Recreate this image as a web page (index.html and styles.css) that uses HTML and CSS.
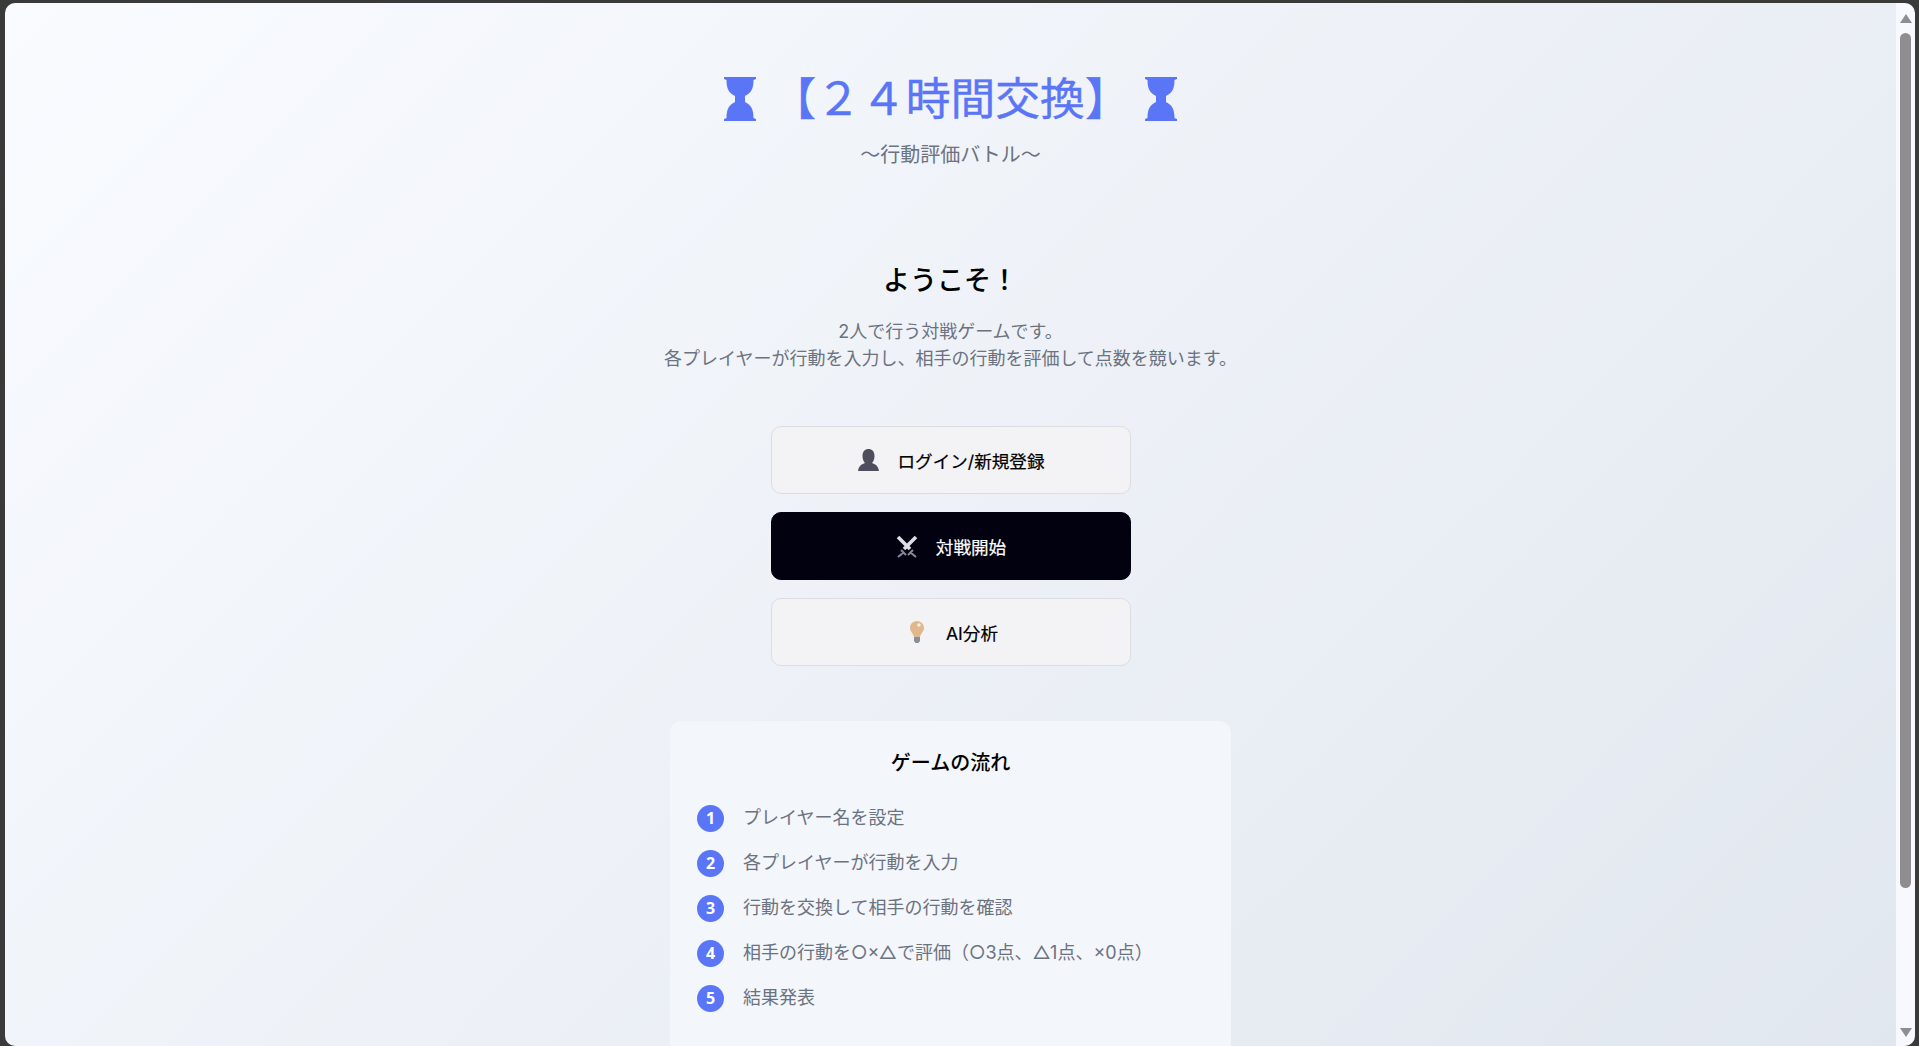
FILE: index.html

```html
<!DOCTYPE html>
<html lang="ja">
<head>
  <meta charset="UTF-8" />
  <meta name="viewport" content="width=device-width, initial-scale=1.0">
  <title>24時間交換</title>
  <link rel="stylesheet" href="styles.css">
</head>
<body>
<div class="window">
  <div class="page">
    <header class="header">
      <h1>
        <svg class="hourglass" viewBox="0 0 32 44" aria-hidden="true"><path d="M0 0H32V2L29.500 3C29.500 12 27 16 21 19V25C27 28 29.500 32 29.500 41L32 42V44H0V42L2.500 41C2.500 32 5 28 11 25V19C5 16 2.500 12 2.500 3L0 2Z"/></svg>
        <span>【２４時間交換】</span>
        <svg class="hourglass" viewBox="0 0 32 44" aria-hidden="true"><path d="M0 0H32V2L29.500 3C29.500 12 27 16 21 19V25C27 28 29.500 32 29.500 41L32 42V44H0V42L2.500 41C2.500 32 5 28 11 25V19C5 16 2.500 12 2.500 3L0 2Z"/></svg>
      </h1>
      <p class="subtitle">〜行動評価バトル〜</p>
    </header>

    <section class="welcome">
      <h2>ようこそ！</h2>
      <p>2人で行う対戦ゲームです。<br>各プレイヤーが行動を入力し、相手の行動を評価して点数を競います。</p>
    </section>

    <div class="actions">
      <button class="btn">
        <svg class="btn-icon" viewBox="0 0 24 24" aria-hidden="true"><path fill="#4e4e5e" d="M12.500 1C9 1 6.500 3.500 6.500 8C6.500 11 7.500 13.500 9 15C6 16 3 17.500 2 23H23C22 17.500 19 16 16 15C17.500 13.500 18.500 11 18.500 8C18.500 3.500 16 1 12.500 1Z"/></svg>
        <span>ログイン/新規登録</span>
      </button>
      <button class="btn btn-dark">
        <svg class="btn-icon" viewBox="0 0 24 24" aria-hidden="true">
          <path stroke="#dcdee6" stroke-width="3.600" fill="none" d="M3 3L15 15M21 3L9 15"/>
          <path stroke="#8a8a96" stroke-width="2" fill="none" d="M6 16L11 21M18 16L13 21M8.500 18.500L3 23M15.500 18.500L21 23"/>
        </svg>
        <span>対戦開始</span>
      </button>
      <button class="btn">
        <svg class="btn-icon btn-icon-bulb" viewBox="0 0 24 24" aria-hidden="true">
          <path fill="#e0b88c" d="M12 1C8 1 5 4 5 8C5 11.500 8 13 9 17H15C16 13 19 11.500 19 8C19 4 16 1 12 1Z"/>
          <circle cx="14" cy="5" r="1.800" fill="#f8eee2"/>
          <path fill="#8a8f9c" d="M9 17H15V21L13.500 23H10.500L9 21Z"/>
        </svg>
        <span>AI分析</span>
      </button>
    </div>

    <section class="flow">
      <h3>ゲームの流れ</h3>
      <ol class="steps">
        <li><span class="num">1</span>プレイヤー名を設定</li>
        <li><span class="num">2</span>各プレイヤーが行動を入力</li>
        <li><span class="num">3</span>行動を交換して相手の行動を確認</li>
        <li><span class="num">4</span>相手の行動を○×△で評価（○3点、△1点、×0点）</li>
        <li><span class="num">5</span>結果発表</li>
      </ol>
    </section>
  </div>

  <div class="scrollbar" aria-hidden="true">
    <span class="arrow-up"></span>
    <span class="thumb"></span>
    <span class="arrow-down"></span>
  </div>
</div>
</body>
</html>
```

FILE: styles.css

```css
* {
  box-sizing: border-box;
}

html, body {
  height: 100%;
}

body {
  margin: 0;
  padding: 3px 4px 0 5px;
  overflow: hidden;
  background: #3a3a3a;
  font-family: Inter, "Noto Sans CJK JP", sans-serif;
  color: #000;
}

.window {
  display: flex;
  height: 100%;
  overflow: hidden;
  border-radius: 10px;
}

.page {
  flex: 1;
  height: 1210px;
  padding-top: 66px;
  background: linear-gradient(135deg, #f9fbff 0%, #e0e6ee 100%);
}

.header {
  text-align: center;
}

h1 {
  display: flex;
  justify-content: center;
  align-items: center;
  gap: 15px;
  margin: 0;
  font-size: 44.800px;
  line-height: 60px;
  font-weight: 400;
  color: #5a76f6;
  -webkit-text-stroke: 0.4px #5a76f6;
}

.hourglass {
  width: 32px;
  height: 44px;
  fill: #5a76f6;
}

.subtitle {
  margin: 11px 0 0;
  font-size: 20px;
  line-height: 30px;
  color: #6b7280;
}

.welcome {
  margin-top: 91px;
  text-align: center;
}

.welcome h2 {
  margin: 0;
  font-size: 27px;
  line-height: 40px;
  font-weight: 500;
}

.welcome p {
  margin: 17px 0 0;
  font-size: 18px;
  line-height: 27px;
  color: #6b7280;
}

.actions {
  display: flex;
  flex-direction: column;
  align-items: center;
  gap: 18px;
  margin-top: 54px;
}

.btn {
  display: flex;
  justify-content: center;
  align-items: center;
  gap: 17px;
  width: 360px;
  height: 68px;
  border: 1px solid #dcdde1;
  border-radius: 10px;
  background: #f3f3f5;
  font-family: inherit;
  font-size: 17.600px;
  font-weight: 400;
  color: #000;
  -webkit-text-stroke: 0.2px currentColor;
}

.btn-dark {
  border-color: #01010f;
  background: #01010f;
  color: #fff;
}

.btn-icon {
  width: 24px;
  height: 24px;
}

.btn-icon-bulb {
  flex: none;
  margin-left: 2px;
}

.flow {
  width: 561px;
  margin: 55px auto 0;
  padding: 24px 27px;
  border-radius: 12px;
  background: #f3f6fb;
}

.flow h3 {
  margin: 0;
  font-size: 20px;
  line-height: 36px;
  font-weight: 500;
  text-align: center;
}

.steps {
  margin: 24px 0 0;
  padding: 0;
  list-style: none;
}

.steps li {
  display: flex;
  align-items: flex-start;
  gap: 19px;
  height: 27px;
  margin-bottom: 18px;
  font-size: 18px;
  line-height: 26px;
  color: #6b7280;
}

.num {
  flex: none;
  width: 27px;
  height: 27px;
  border-radius: 50%;
  background: #5a76f6;
  font-family: "Noto Sans", sans-serif;
  font-size: 16px;
  font-weight: 700;
  line-height: 27px;
  text-align: center;
  color: #fff;
}

.scrollbar {
  flex: none;
  display: flex;
  flex-direction: column;
  align-items: center;
  width: 19px;
  padding-top: 11px;
  background: #f7f9ff;
}

.arrow-up, .arrow-down {
  width: 0;
  height: 0;
  border-left: 6px solid transparent;
  border-right: 6px solid transparent;
}

.arrow-up {
  border-bottom: 9px solid #8f8d90;
}

.arrow-down {
  margin-top: 140px;
  border-top: 9px solid #8f8d90;
}

.thumb {
  width: 11px;
  height: 855px;
  margin-top: 10px;
  border-radius: 6px;
  background: #8f8d90;
}
```
